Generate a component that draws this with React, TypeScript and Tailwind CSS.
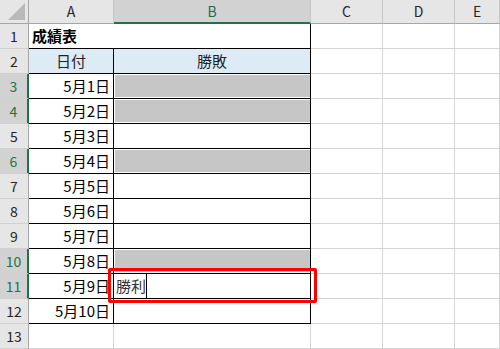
import React from "react";

const font = { fontFamily: '"Noto Sans CJK JP", "Noto Sans", sans-serif' };

const selectedRows = [3, 4, 6, 10, 11];
const grayFill = [3, 4, 6, 10];

const dates = ["5月1日", "5月2日", "5月3日", "5月4日", "5月5日", "5月6日", "5月7日", "5月8日", "5月9日", "5月10日"];

function ColHeader({ label, active }: { label: string; active?: boolean }) {
    return (
        <div
            className={
                "flex items-center justify-center text-[14px] border-r border-r-[#c8c8c8] " +
                (active
                    ? "bg-[#d2d2d2] text-[#1f6b45] border-b-2 border-b-[#217346]"
                    : "bg-[#e6e6e6] text-[#262626] border-b border-b-[#a6a6a6]")
            }
        >
            {label}
        </div>
    );
}

function RowHeader({ n }: { n: number }) {
    const active = selectedRows.includes(n);
    return (
        <div
            className={
                "flex items-center justify-center text-[14px] border-b border-b-[#d0d0d0] " +
                (active
                    ? "bg-[#d2d2d2] text-[#217346] border-r-2 border-r-[#217346]"
                    : "bg-[#e6e6e6] text-[#262626] border-r border-r-[#a6a6a6]")
            }
        >
            {n}
        </div>
    );
}

function Blank() {
    return <div className="border-r border-b border-[#d4d4d4]" />;
}

export default function App() {
    const rows = [];
    for (let n = 1; n <= 13; n++) {
        const cells: React.ReactNode[] = [<RowHeader key="h" n={n} />];
        if (n === 1) {
            cells.push(
                <div key="ab" className="col-span-2 flex items-center pl-[3px] text-[15px] font-bold text-black border-r border-b border-black">
                    成績表
                </div>
            );
        } else if (n === 2) {
            cells.push(
                <div key="a" className="flex items-center justify-center bg-[#ddebf7] text-[15px] text-[#222] border-r border-b border-black">
                    日付
                </div>,
                <div key="b" className="flex items-center justify-center bg-[#ddebf7] text-[15px] text-[#222] border-r border-b border-black">
                    勝敗
                </div>
            );
        } else if (n <= 12) {
            cells.push(
                <div key="a" className="flex items-center justify-end pr-[3px] text-[15px] text-black border-r border-b border-black">
                    {dates[n - 3]}
                </div>
            );
            if (grayFill.includes(n)) {
                cells.push(
                    <div key="b" className="pt-[1px] pb-[1px] pl-[1px] border-r border-b border-black">
                        <div className="h-full bg-[#c6c6c6]" />
                    </div>
                );
            } else if (n === 11) {
                cells.push(
                    <div key="b" className="flex items-stretch pl-[2px] text-[15px] text-[#333] border-r border-b border-black">
                        <span className="flex items-center">勝利</span>
                        <div className="w-[1px] bg-black" />
                    </div>
                );
            } else {
                cells.push(<div key="b" className="border-r border-b border-black" />);
            }
        } else {
            cells.push(<Blank key="a" />, <Blank key="b" />);
        }
        cells.push(<Blank key="c" />, <Blank key="d" />, <Blank key="e" />);
        rows.push(<React.Fragment key={n}>{cells}</React.Fragment>);
    }

    return (
        <div className="relative w-[500px] h-[349px] overflow-hidden bg-white" style={font}>
            <div className="grid grid-cols-[29px_85px_197px_72px_72px_1fr] grid-rows-[24px_repeat(13,25px)]">
                <div className="relative bg-[#e6e6e6] border-r border-b border-[#a6a6a6]">
                    <svg className="absolute right-[3px] bottom-[3px]" width="17" height="17" viewBox="0 0 17 17">
                        <polygon points="17,0 17,17 0,17" fill="#b9b9b9" />
                    </svg>
                </div>
                <ColHeader label="A" />
                <ColHeader label="B" active />
                <ColHeader label="C" />
                <ColHeader label="D" />
                <ColHeader label="E" />
                {rows}
            </div>
            <div className="absolute left-[108px] top-[268px] w-[209px] h-[35px] border-[3px] border-[#ff0000] rounded-[2px]" />
        </div>
    );
}
